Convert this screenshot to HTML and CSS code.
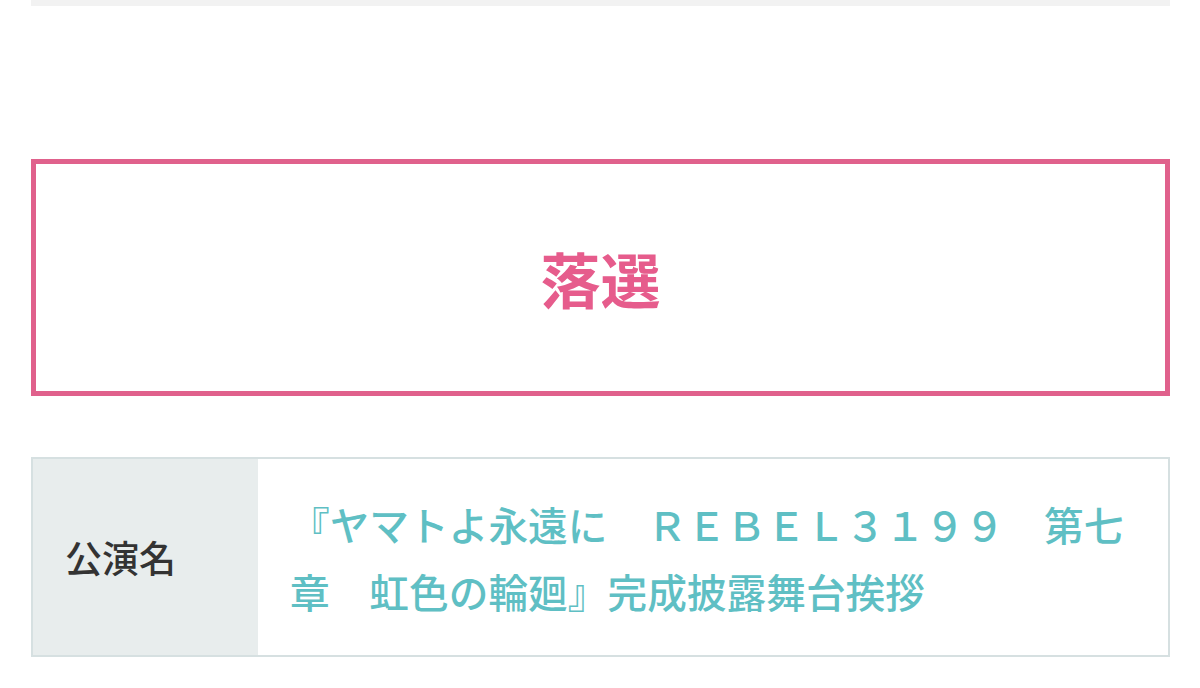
FILE: index.html
```html
<!DOCTYPE html>
<html lang="ja">
<head>
  <meta charset="UTF-8" />
  <meta name="viewport" content="width=device-width, initial-scale=1.0"/>
  <title>抽選結果</title>
  <link rel="stylesheet" href="styles.css">
</head>
<body>
  <div class="page">
    <div class="notice-bar"></div>

    <div class="result-box">
      <span class="result-label">落選</span>
    </div>

    <table class="detail">
      <tr>
        <th>公演名</th>
        <td>『ヤマトよ永遠に　ＲＥＢＥＬ３１９９　第七章　虹色の輪廻』完成披露舞台挨拶</td>
      </tr>
    </table>
  </div>
</body>
</html>
```

FILE: styles.css
```css
body {
  margin: 0;
  padding: 0;
  background: #fff;
  font-family: "Noto Sans CJK JP", "Noto Sans", sans-serif;
  color: #333;
}

.page {
  padding: 0 30px 0 31px;
}

.notice-bar {
  height: 6px;
  background: #f2f2f2;
}

.result-box {
  margin-top: 153px;
  height: 227px;
  border: 5px solid #e0618c;
  display: flex;
  align-items: center;
  justify-content: center;
}

.result-label {
  font-size: 60px;
  font-weight: bold;
  color: #e65c8c;
  line-height: 1;
}

.detail {
  margin-top: 61px;
  width: 100%;
  border-collapse: collapse;
  border: 2px solid #d6e0e1;
}

.detail th {
  width: 193px;
  padding: 0 0 0 32px;
  background: #e8eded;
  text-align: left;
  font-size: 37px;
  font-weight: 500;
  color: #333;
}

.detail td {
  height: 196px;
  box-sizing: border-box;
  padding: 31px 28px 31px 32px;
  font-size: 39.7px;
  font-weight: 500;
  line-height: 67px;
  color: #5fbfc4;
}
```
